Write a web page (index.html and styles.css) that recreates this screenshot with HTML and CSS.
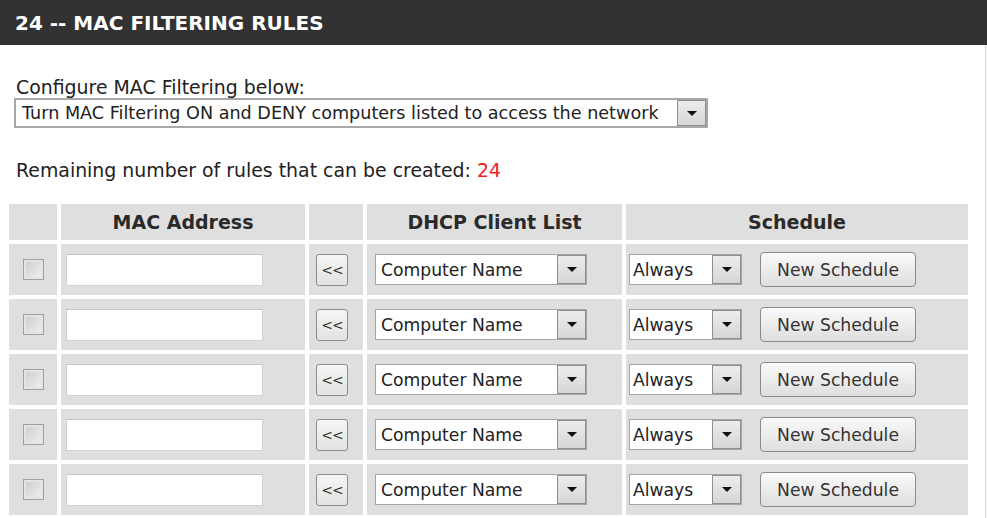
FILE: index.html
```html
<!DOCTYPE html>
<html lang="en">
<head>
<meta charset="utf-8">
<title>MAC Filtering Rules</title>
<link rel="stylesheet" href="styles.css">
</head>
<body>
<div class="panel">
  <div class="panel-head"><h2>24 -- MAC FILTERING RULES</h2></div>
  <div class="panel-body">
    <p class="label">Configure MAC Filtering below:</p>
    <div class="select select-wide">
      <span class="select-text">Turn MAC Filtering ON and DENY computers listed to access the network</span>
      <span class="select-btn"><span class="tri"></span></span>
    </div>
    <p class="remaining">Remaining number of rules that can be created: <span class="count">24</span></p>
    <table class="rules">
      <colgroup>
        <col class="c-check"><col class="c-mac"><col class="c-copy"><col class="c-dhcp"><col class="c-sched">
      </colgroup>
      <thead>
        <tr><th></th><th>MAC Address</th><th></th><th>DHCP Client List</th><th>Schedule</th></tr>
      </thead>
      <tbody>
        <tr>
          <td class="center"><span class="checkbox"></span></td>
          <td><span class="textbox"></span></td>
          <td><span class="copy-btn">&lt;&lt;</span></td>
          <td><div class="select select-dhcp"><span class="select-text">Computer Name</span><span class="select-btn"><span class="tri"></span></span></div></td>
          <td><div class="sched"><div class="select select-always"><span class="select-text">Always</span><span class="select-btn"><span class="tri"></span></span></div><span class="btn">New Schedule</span></div></td>
        </tr>
        <tr>
          <td class="center"><span class="checkbox"></span></td>
          <td><span class="textbox"></span></td>
          <td><span class="copy-btn">&lt;&lt;</span></td>
          <td><div class="select select-dhcp"><span class="select-text">Computer Name</span><span class="select-btn"><span class="tri"></span></span></div></td>
          <td><div class="sched"><div class="select select-always"><span class="select-text">Always</span><span class="select-btn"><span class="tri"></span></span></div><span class="btn">New Schedule</span></div></td>
        </tr>
        <tr>
          <td class="center"><span class="checkbox"></span></td>
          <td><span class="textbox"></span></td>
          <td><span class="copy-btn">&lt;&lt;</span></td>
          <td><div class="select select-dhcp"><span class="select-text">Computer Name</span><span class="select-btn"><span class="tri"></span></span></div></td>
          <td><div class="sched"><div class="select select-always"><span class="select-text">Always</span><span class="select-btn"><span class="tri"></span></span></div><span class="btn">New Schedule</span></div></td>
        </tr>
        <tr>
          <td class="center"><span class="checkbox"></span></td>
          <td><span class="textbox"></span></td>
          <td><span class="copy-btn">&lt;&lt;</span></td>
          <td><div class="select select-dhcp"><span class="select-text">Computer Name</span><span class="select-btn"><span class="tri"></span></span></div></td>
          <td><div class="sched"><div class="select select-always"><span class="select-text">Always</span><span class="select-btn"><span class="tri"></span></span></div><span class="btn">New Schedule</span></div></td>
        </tr>
        <tr>
          <td class="center"><span class="checkbox"></span></td>
          <td><span class="textbox"></span></td>
          <td><span class="copy-btn">&lt;&lt;</span></td>
          <td><div class="select select-dhcp"><span class="select-text">Computer Name</span><span class="select-btn"><span class="tri"></span></span></div></td>
          <td><div class="sched"><div class="select select-always"><span class="select-text">Always</span><span class="select-btn"><span class="tri"></span></span></div><span class="btn">New Schedule</span></div></td>
        </tr>
      </tbody>
    </table>
  </div>
</div>
</body>
</html>
```
FILE: styles.css
```css
* { box-sizing: border-box; }
html, body { margin: 0; padding: 0; background: #fff; }
body {
  width: 987px;
  height: 518px;
  overflow: hidden;
  font-family: "DejaVu Sans", Verdana, sans-serif;
  color: #222;
}
.panel { width: 987px; }
.panel-head {
  height: 45px;
  background: #323232;
  display: flex;
  align-items: center;
  padding-left: 15px;
}
.panel-head h2 {
  margin: 0;
  color: #fff;
  font-size: 20px;
  font-weight: bold;
}
.panel-body {
  width: 986px;
  border-right: 1px solid #d6d6d6;
  height: 473px;
  padding-top: 31px;
}
.label {
  margin: 0 0 0 16px;
  font-size: 18.9px;
  line-height: 22px;
}
.select {
  display: flex;
  background: #fff;
  border: 1px solid #a6a6a6;
  align-items: stretch;
}
.select-text {
  flex: 1;
  display: flex;
  align-items: center;
  white-space: nowrap;
  overflow: hidden;
}
.select-btn {
  width: 29px;
  background: linear-gradient(#ececec, #d6d6d6);
  border: 1px solid #8e8e8e;
  display: flex;
  align-items: center;
  justify-content: center;
}
.tri {
  width: 0;
  height: 0;
  border-left: 5px solid transparent;
  border-right: 5px solid transparent;
  border-top: 5px solid #111;
}
.select-wide {
  margin: 0 0 0 14px;
  width: 694px;
  height: 30px;
  border: 2px solid #a8a8a8;
}
.select-wide .select-text {
  padding-left: 6px;
  font-size: 17.6px;
}
.remaining {
  margin: 31px 0 0 16px;
  font-size: 18.9px;
  line-height: 22px;
}
.count { color: #ee2222; }
.rules {
  margin: 19px 0 0 5px;
  border-collapse: separate;
  border-spacing: 4px;
  table-layout: fixed;
  width: 967px;
}
.c-check { width: 48px; }
.c-mac { width: 244px; }
.c-copy { width: 54px; }
.c-dhcp { width: 255px; }
.c-sched { width: 342px; }
.rules th, .rules td {
  background: #dfdfdf;
  padding: 0;
}
.rules th {
  height: 36px;
  font-size: 19px;
  font-weight: bold;
  color: #2a2a2a;
  text-align: center;
  vertical-align: middle;
}
.rules td {
  height: 51px;
  vertical-align: middle;
}
.rules td.center { text-align: center; }
.checkbox {
  display: inline-block;
  vertical-align: middle;
  width: 21px;
  height: 21px;
  border: 1px solid #a0a0a0;
  background: linear-gradient(135deg, #cbcbcb, #f2f2f2);
  box-shadow: inset 0 0 0 2px #e4e4e4;
}
.textbox {
  display: block;
  margin-left: 5px;
  width: 197px;
  height: 32px;
  background: #fff;
  border: 1px solid #d2d2d2;
  border-top-color: #c4c4c4;
}
.copy-btn {
  display: flex;
  align-items: center;
  justify-content: center;
  margin-left: 7px;
  width: 32px;
  height: 32px;
  border: 1px solid #8c8c8c;
  border-radius: 3px;
  background: linear-gradient(#f6f6f6, #e2e2e2);
  font-size: 14px;
  color: #333;
  letter-spacing: -1px;
}
.select-dhcp {
  margin-left: 8px;
  width: 212px;
  height: 31px;
}
.select-dhcp .select-text,
.select-always .select-text {
  padding-left: 5px;
  font-size: 17.2px;
}
.sched {
  display: flex;
  align-items: center;
  margin-left: 3px;
  gap: 18px;
}
.select-always {
  width: 113px;
  height: 31px;
}
.select-always .select-text { padding-left: 3px; }
.btn {
  display: flex;
  align-items: center;
  justify-content: center;
  width: 156px;
  height: 35px;
  border: 1px solid #8a8a8a;
  border-radius: 4px;
  background: linear-gradient(#fafafa, #dedede);
  font-size: 17.2px;
  color: #333;
}
```
